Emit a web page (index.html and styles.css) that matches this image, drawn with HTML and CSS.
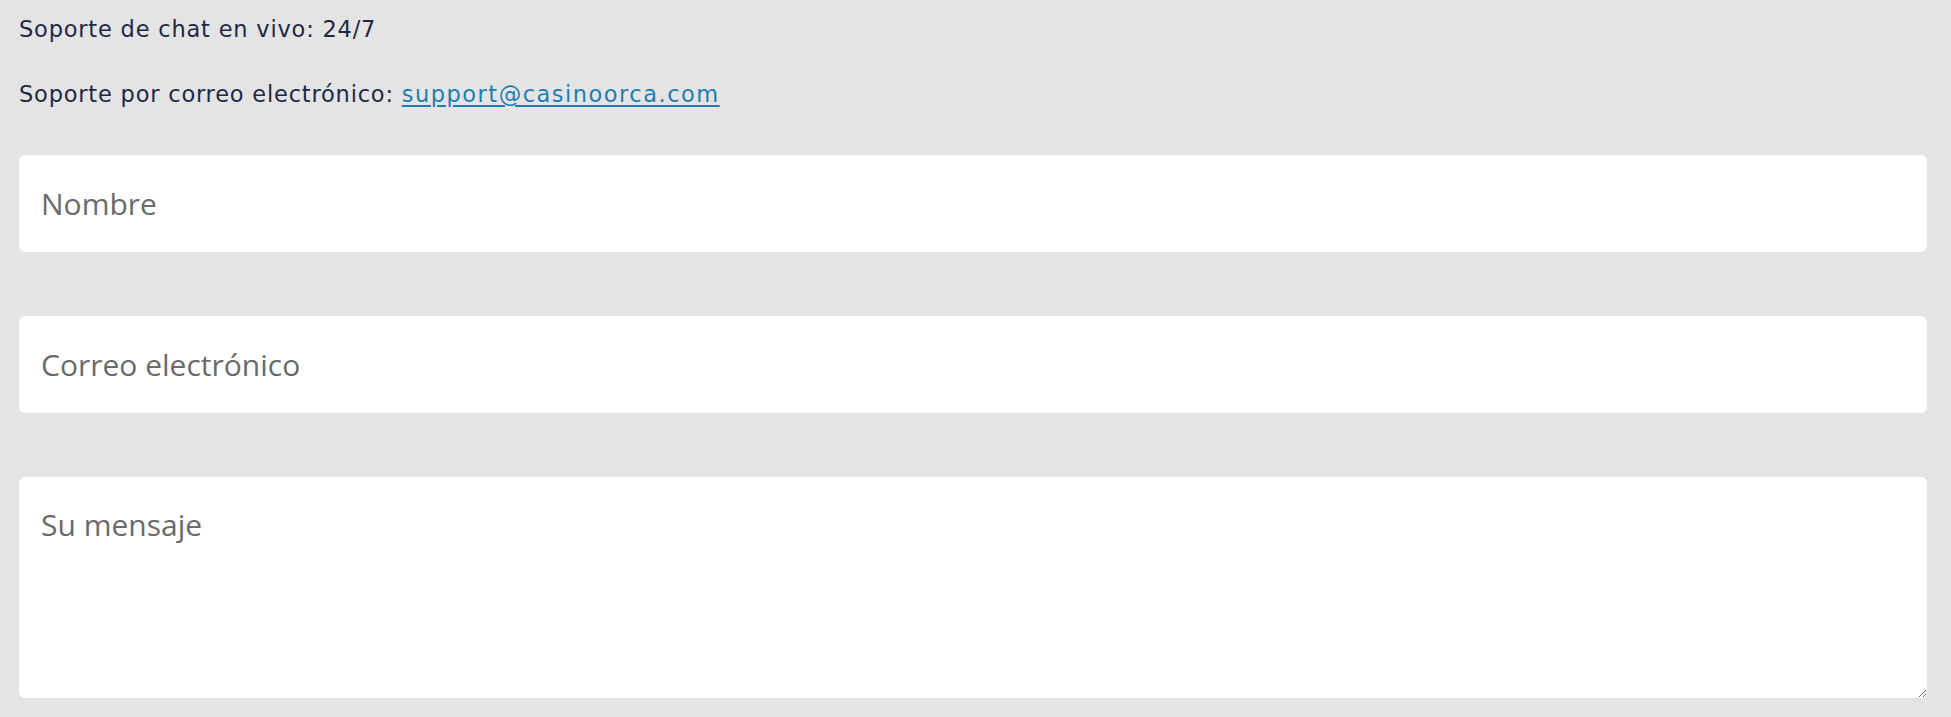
FILE: index.html
```html
<!DOCTYPE html>
<html lang="es">
<head>
<meta charset="utf-8">
<title>Contacto</title>
<link rel="stylesheet" href="styles.css">
</head>
<body>
<main class="contact">
  <p class="info">Soporte de chat en vivo: 24/7</p>
  <p class="info">Soporte por correo electrónico: <a class="mail" href="#">support@casinoorca.com</a></p>
  <form class="form">
    <input class="field" type="text" placeholder="Nombre">
    <input class="field" type="email" placeholder="Correo electrónico">
    <textarea class="field area" placeholder="Su mensaje"></textarea>
  </form>
</main>
</body>
</html>
```

FILE: styles.css
```css
html, body {
  margin: 0;
  padding: 0;
  background: #e4e4e4;
}

.contact {
  padding: 14px 24px 0 19px;
  font-family: "DejaVu Sans", "Open Sans", sans-serif;
  color: #1d2946;
}

.info {
  margin: 0;
  font-size: 22.5px;
  line-height: 30px;
  letter-spacing: 0.8px;
}

.info + .info {
  margin-top: 35px;
}

.mail {
  color: #1b7fb3;
  letter-spacing: 1.5px;
  text-decoration: underline;
  text-underline-offset: 3px;
}

.form {
  margin-top: 46px;
  display: flex;
  flex-direction: column;
  gap: 64px;
}

.field {
  box-sizing: border-box;
  width: 100%;
  height: 97px;
  margin: 0;
  padding: 0 22px;
  border: none;
  border-radius: 6px;
  background: #ffffff;
  font-family: "Open Sans", "Liberation Sans", sans-serif;
  font-size: 30px;
  line-height: 45px;
  color: #333333;
  outline: none;
}

.field::placeholder {
  color: #6a6a6a;
  opacity: 1;
}

.area {
  display: block;
  height: 221px;
  padding: 25px 22px;
  resize: vertical;
}
```
